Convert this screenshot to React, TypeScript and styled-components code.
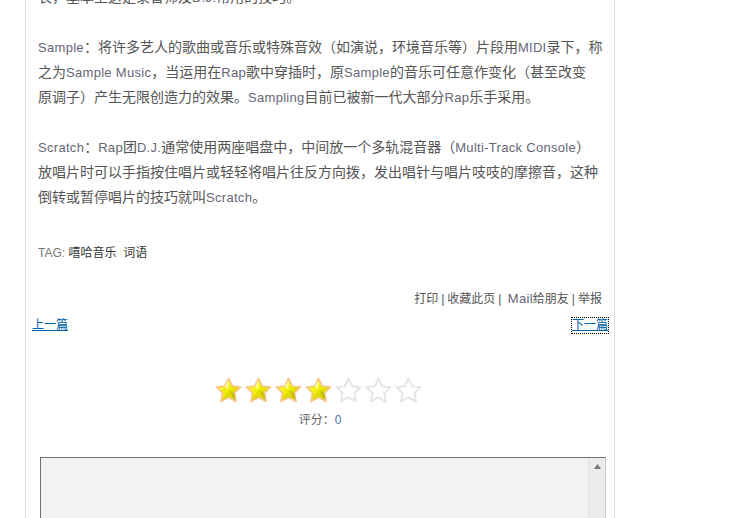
import React from "react";
import styled, { createGlobalStyle } from "styled-components";

const Global = createGlobalStyle`
  html, body { margin: 0; padding: 0; background: #fff; overflow: hidden; }
  body { font-family: "Liberation Sans", Arial, "Noto Sans CJK SC", sans-serif; }
`;

const Page = styled.div`
  width: 743px;
  height: 518px;
  overflow: hidden;
`;

const Article = styled.div`
  margin-left: 25px;
  width: 588px;
  border-left: 1px solid #dcdcdc;
  border-right: 1px solid #dcdcdc;
  margin-top: -15px;
  padding-bottom: 40px;
`;

const Body = styled.div`
  padding: 0 6px 0 12px;
  color: #555;
  font-size: 14px;
  line-height: 25px;
`;

const Para = styled.p`
  margin: 0 0 25px;
  white-space: nowrap;
`;

const Latin = styled.span`
  color: #667;
  font-size: 13px;
  letter-spacing: 0.3px;
`;

const TagLine = styled.div`
  padding: 8px 12px 0;
  font-size: 12px;
  line-height: 20px;
  color: #333;
`;

const TagLabel = styled.span`
  color: #777;
`;

const Tools = styled.div`
  margin-top: 26px;
  padding: 0 12px;
  text-align: right;
  font-size: 12px;
  line-height: 20px;
  color: #555;
`;

const Sep = styled.span`
  color: #555;
  margin: 0 3px;
`;

const Nav = styled.div`
  margin-top: 9px;
  padding: 0 6px;
  display: flex;
  justify-content: space-between;
  font-size: 12px;
  line-height: 20px;
`;

const NavLink = styled.a<{ $focused?: boolean }>`
  color: #0062a8;
  text-decoration: underline;
  outline: ${(p) => (p.$focused ? "1px dotted #000" : "none")};
  line-height: 15px;
  align-self: center;
`;

const Rating = styled.div`
  margin-top: 44px;
  display: flex;
  flex-direction: column;
  align-items: center;
`;

const Stars = styled.div`
  display: flex;
  gap: 3px;
  margin-right: 3px;
`;

const Score = styled.div`
  margin-top: 8px;
  font-size: 12px;
  line-height: 18px;
  color: #666;
`;

const ScoreNum = styled.span`
  color: #4a78a8;
`;

const Box = styled.div`
  margin: 28px 8px 0 14px;
  height: 120px;
  background: #f2f2f2;
  border: 1px solid #707070;
  border-right-color: #c8c8c8;
  display: flex;
  justify-content: flex-end;
`;

const ScrollBar = styled.div`
  width: 16px;
  background: #ececec;
  border-left: 1px solid #e0e0e0;
  display: flex;
  justify-content: center;
  padding-top: 6px;
`;

const Star: React.FC<{ filled: boolean; id: number }> = ({ filled, id }) => {
  const pts = "13.5,1.5 17.2,9.2 25.5,10.2 19.4,16 21,24.5 13.5,20.4 6,24.5 7.6,16 1.5,10.2 9.8,9.2";
  if (!filled) {
    return (
      <svg width="27" height="26" viewBox="0 0 27 26">
        <polygon points={pts} fill="#fff" stroke="#e6e6e6" strokeWidth="2" strokeLinejoin="round" />
      </svg>
    );
  }
  return (
    <svg width="27" height="26" viewBox="0 0 27 26">
      <defs>
        <linearGradient id={`g${id}`} x1="0" y1="0" x2="1" y2="1">
          <stop offset="0" stopColor="#ffff60" />
          <stop offset="0.5" stopColor="#eeee00" />
          <stop offset="1" stopColor="#b8b000" />
        </linearGradient>
      </defs>
      <polygon points={pts} fill={`url(#g${id})`} stroke="#f8c88a" strokeWidth="1.8" strokeLinejoin="round" />
      <polygon points="13.5,3 13.5,13 9.8,9.6" fill="#ffffa8" opacity="0.8" />
      <polygon points="13.5,13 19.5,16.2 21,23.5" fill="#a8a000" opacity="0.45" />
      <polygon points="13.5,13 13.5,20 7,23.5" fill="#d8d000" opacity="0.5" />
    </svg>
  );
};

export default function App() {
  return (
    <Page>
      <Global />
      <Article>
        <Body>
          <Para>长，基本上这是录音师及<Latin>D.J.</Latin>常用的技巧。</Para>
          <Para>
            <Latin>Sample</Latin>：将许多艺人的歌曲或音乐或特殊音效（如演说，环境音乐等）片段用<Latin>MIDI</Latin>录下，称
            <br />
            之为<Latin>Sample Music</Latin>，当运用在<Latin>Rap</Latin>歌中穿插时，原<Latin>Sample</Latin>的音乐可任意作变化（甚至改变
            <br />
            原调子）产生无限创造力的效果。<Latin>Sampling</Latin>目前已被新一代大部分<Latin>Rap</Latin>乐手采用。
          </Para>
          <Para>
            <Latin>Scratch</Latin>：<Latin>Rap</Latin>团<Latin>D.J.</Latin>通常使用两座唱盘中，中间放一个多轨混音器（<Latin>Multi-Track Console</Latin>）
            <br />
            放唱片时可以手指按住唱片或轻轻将唱片往反方向拨，发出唱针与唱片吱吱的摩擦音，这种
            <br />
            倒转或暂停唱片的技巧就叫<Latin>Scratch</Latin>。
          </Para>
        </Body>
        <TagLine>
          <TagLabel>TAG:</TagLabel> 嘻哈音乐&nbsp;&nbsp;词语
        </TagLine>
        <Tools>
          打印<Sep>|</Sep>收藏此页<Sep>|</Sep> <Latin>Mail</Latin>给朋友<Sep>|</Sep>举报
        </Tools>
        <Nav>
          <NavLink href="#">上一篇</NavLink>
          <NavLink href="#" $focused>下一篇</NavLink>
        </Nav>
        <Rating>
          <Stars>
            {[0, 1, 2, 3, 4, 5, 6].map((i) => (
              <Star key={i} id={i} filled={i < 4} />
            ))}
          </Stars>
          <Score>
            评分：<ScoreNum>0</ScoreNum>
          </Score>
        </Rating>
        <Box>
          <ScrollBar>
            <svg width="7" height="5" viewBox="0 0 7 5">
              <polygon points="3.5,0 7,5 0,5" fill="#777" />
            </svg>
          </ScrollBar>
        </Box>
      </Article>
    </Page>
  );
}
